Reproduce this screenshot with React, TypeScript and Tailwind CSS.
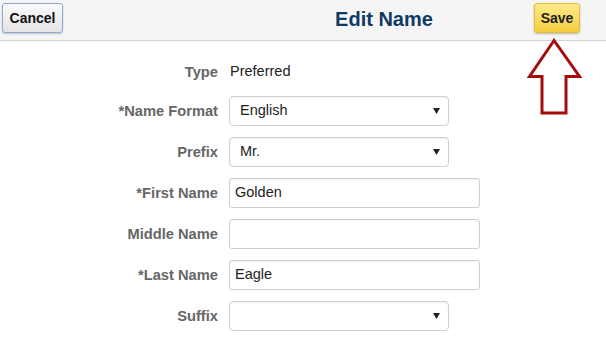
import React from "react";

const Caret = () => (
  <svg width="7" height="6" viewBox="0 0 7 6" className="shrink-0">
    <path d="M0 0h7L3.5 6z" fill="#222" />
  </svg>
);

const Select = ({ value }: { value: string }) => (
  <div className="w-[220px] h-[30px] flex items-center justify-between pl-[10px] pr-[8px] border border-[#cfcfcf] rounded-[4px] bg-white shadow-[inset_0_1px_2px_rgba(0,0,0,0.06)] text-[14.5px] text-[#222]">
    <span>{value}</span>
    <Caret />
  </div>
);

const Input = ({ value }: { value: string }) => (
  <div className="w-[251px] h-[30px] flex items-center pl-[5px] border border-[#cfcfcf] rounded-[3px] bg-white shadow-[inset_0_1px_2px_rgba(0,0,0,0.06)] text-[14.5px] text-[#222]">
    {value}
  </div>
);

const rows: { label: string; kind: "text" | "select" | "input"; value: string }[] = [
  { label: "*Name Format", kind: "select", value: "English" },
  { label: "Prefix", kind: "select", value: "Mr." },
  { label: "*First Name", kind: "input", value: "Golden" },
  { label: "Middle Name", kind: "input", value: "" },
  { label: "*Last Name", kind: "input", value: "Eagle" },
  { label: "Suffix", kind: "select", value: "" },
];

export default function App() {
  return (
    <div className="w-[606px] h-[339px] bg-white relative overflow-hidden font-['Liberation_Sans',Arial,sans-serif]">
      {/* Header */}
      <div className="h-[41px] bg-[#f5f5f5] border-b border-[#d3d3d3] flex items-start justify-between pt-[3px] px-[2px] relative">
        <button className="h-[30px] px-[6px] w-[61px] rounded-[3px] border border-[#8ea9d6] bg-gradient-to-b from-[#fafafa] to-[#e4e4e4] shadow-[0_1px_2px_rgba(0,0,0,0.2)] text-[14px] font-bold text-[#111]">
          Cancel
        </button>
        <h1 className="absolute left-0 right-0 top-[4px] text-center text-[20px] font-bold text-[#0f3a63] pl-[162px]">
          Edit Name
        </h1>
        <button className="h-[30px] w-[46px] mr-[24px] rounded-[3px] border border-[#e0bd3a] bg-gradient-to-b from-[#fdeb8a] to-[#f6cd3c] shadow-[0_1px_2px_rgba(0,0,0,0.25)] text-[14px] font-bold text-[#222] relative">
          Save
        </button>
      </div>

      {/* Arrow pointing at Save */}
      <svg className="absolute left-[527px] top-[38px]" width="56" height="78" viewBox="0 0 56 78">
        <path d="M27 2.5L2.5 38.5H15V75H39V38.5H52.5Z" fill="white" stroke="#a50d0d" strokeWidth="3" strokeLinejoin="miter" />
      </svg>

      {/* Form */}
      <div className="pt-[16px] flex flex-col">
        <div className="flex items-center h-[30px] mb-[9px]">
          <div className="w-[218px] text-right text-[14.7px] font-bold text-[#666]">Type</div>
          <div className="ml-[12px] text-[14.5px] text-[#222]">Preferred</div>
        </div>
        <div className="flex flex-col gap-[11px]">
          {rows.map((r) => (
            <div key={r.label} className="flex items-center h-[30px]">
              <div className="w-[218px] text-right text-[14.7px] font-bold text-[#666]">{r.label}</div>
              <div className="ml-[11px]">
                {r.kind === "select" ? <Select value={r.value} /> : <Input value={r.value} />}
              </div>
            </div>
          ))}
        </div>
      </div>
    </div>
  );
}
